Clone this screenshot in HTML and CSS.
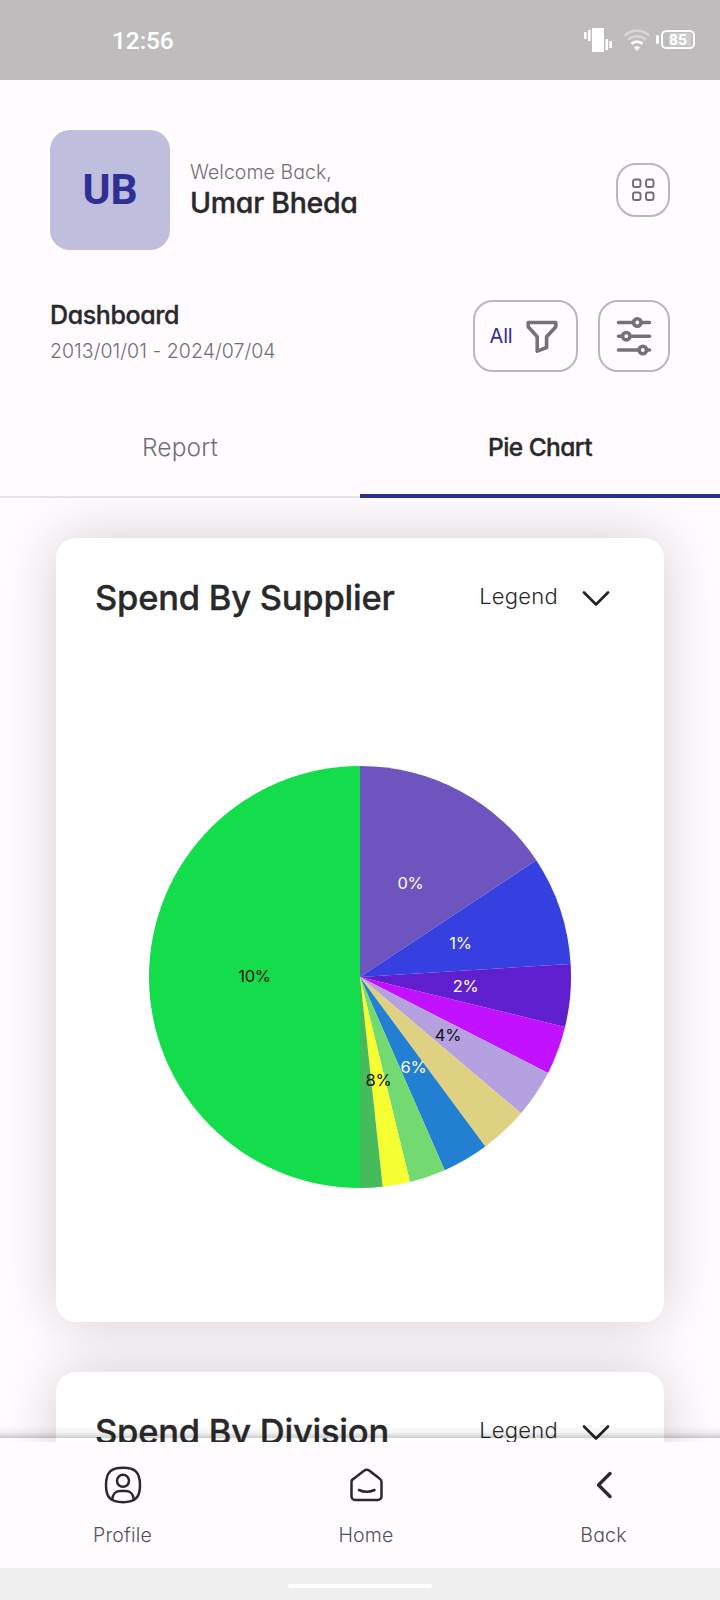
FILE: index.html
```html
<!DOCTYPE html>
<html lang="en">
<head>
<meta charset="utf-8">
<title>Dashboard</title>
<link rel="stylesheet" href="styles.css">
</head>
<body>
<div class="screen">
  <div class="status">
    <span class="clock">12:56</span>
    <svg class="status-icons" width="112" height="24" viewBox="0 0 112 24">
      <g fill="#fff">
        <rect x="0" y="4" width="2.6" height="7"/><rect x="4" y="2" width="2.6" height="11"/>
        <rect x="8" y="0" width="12" height="24"/>
        <rect x="21.500" y="11" width="2.600" height="11"/><rect x="25.300" y="13" width="2.600" height="7"/>
        <path d="M53 23l-3-3.500a4.500 4.500 0 0 1 6 0z"/>
        <rect x="72" y="7" width="3" height="9" rx="1.500"/>
      </g>
      <g fill="none" stroke="#fff" stroke-width="2.600">
        <path d="M40.800 7.400a18.500 18.500 0 0 1 24.400 0M44.300 11.600a13 13 0 0 1 17.400 0" opacity=".4"/>
        <path d="M47.500 15.800a8 8 0 0 1 11 0"/>
        <rect x="78" y="3" width="32" height="17" rx="4.500" stroke-width="2"/>
      </g>
      <rect x="85" y="5" width="22" height="13" rx="2" fill="#fff" opacity=".25"/>
      <text x="94" y="17" class="battery">85</text>
    </svg>
  </div>

  <header class="welcome">
    <div class="avatar">UB</div>
    <div class="who"><div class="hello">Welcome Back,</div><div class="name">Umar Bheda</div></div>
    <button class="btn grid-btn" aria-label="Menu">
      <svg width="24" height="24" viewBox="0 0 24 24" fill="none" stroke="#6f6f71" stroke-width="1.900">
        <rect x="2" y="1.500" width="7.500" height="7.500" rx="2"/><rect x="15" y="1.500" width="7.500" height="7.500" rx="2"/>
        <rect x="2" y="14.500" width="7.500" height="7.500" rx="2"/><rect x="15" y="14.500" width="7.500" height="7.500" rx="2"/>
      </svg>
    </button>
  </header>

  <section class="toolbar">
    <div class="heading"><div class="page-title">Dashboard</div><div class="dates">2013/01/01 - 2024/07/04</div></div>
    <button class="btn filter-btn"><span>All</span>
      <svg width="32" height="34" viewBox="0 0 32 34" fill="none" stroke="#737375" stroke-width="3.600" stroke-linejoin="round"><path d="M2.200 2.500h27.600v4.200l-9.200 10v10.800l-9.400 3.600V16.700L2.200 6.700z"/></svg>
    </button>
    <button class="btn slider-btn" aria-label="Settings">
      <svg width="36" height="40" viewBox="0 0 36 40" fill="none" stroke="#737375" stroke-width="3.600" stroke-linecap="round">
        <path d="M2.500 6.500H17M25.500 6.500h8M2.500 20.200H6M14.500 20.200h19M2.500 34H22.500M31 34h2.500"/>
        <circle cx="21.300" cy="6.500" r="3.700"/><circle cx="10.300" cy="20.200" r="3.700"/><circle cx="26.800" cy="34" r="3.700"/>
      </svg>
    </button>
  </section>

  <nav class="tabs"><div class="tab"><span>Report</span></div><div class="tab active"><span>Pie Chart</span></div></nav>

  <main class="content">
    <article class="card">
      <div class="card-head"><h2 class="supplier">Spend By Supplier</h2><span class="legend">Legend</span>
        <svg class="chevron" width="28" height="16" viewBox="0 0 28 16"><path d="M2 2.500l12 12 12-12"/></svg></div>
      <svg class="pie" width="424" height="424" viewBox="-212 -212 424 424">
        <path fill="#6e54be" d="M0 0V-211A211 211 0 0 1 176.300-116.700z"/>
        <path fill="#363fdf" d="M0 0L176.300-116.700A211 211 0 0 1 210.600-13z"/>
        <path fill="#601fcf" d="M0 0L210.600-13A211 211 0 0 1 205 50z"/>
        <path fill="#c111ff" d="M0 0L205 50A211 211 0 0 1 188 96z"/>
        <path fill="#b6a1e0" d="M0 0L188 96A211 211 0 0 1 161 136.300z"/>
        <path fill="#ded182" d="M0 0L161 136.300A211 211 0 0 1 125.300 169.600z"/>
        <path fill="#237fd1" d="M0 0L125.300 169.600A211 211 0 0 1 84.700 193.200z"/>
        <path fill="#73d971" d="M0 0L84.700 193.200A211 211 0 0 1 50 205z"/>
        <path fill="#f5ff31" d="M0 0L50 205A211 211 0 0 1 22.700 209.800z"/>
        <path fill="#46bb5c" d="M0 0L22.700 209.800A211 211 0 0 1 0 211z"/>
        <path fill="#14dd4b" d="M0 0V211A211 211 0 0 1 0-211z"/>
        <g class="light"><text x="50.500" y="-88">0%</text><text x="100.500" y="-28">1%</text><text x="105.500" y="15">2%</text><text x="53.500" y="96">6%</text></g>
        <g class="dark"><text x="88" y="64">4%</text><text x="18.500" y="109">8%</text><text x="-105.500" y="5">10%</text></g>
      </svg>
    </article>
    <article class="card">
      <div class="card-head"><h2 class="division">Spend By Division</h2><span class="legend">Legend</span>
        <svg class="chevron" width="28" height="16" viewBox="0 0 28 16"><path d="M2 2.500l12 12 12-12"/></svg></div>
    </article>
    <div class="nav-shadow"></div>
  </main>

  <nav class="bottom">
    <div class="item">
      <svg width="40" height="40" viewBox="0 0 40 40"><path d="M20 2.800C32 2.800 37 7 37 20S32 37.200 20 37.200 3 33 3 20 8 2.800 20 2.800z"/><circle cx="20" cy="15.800" r="6"/><path d="M9.200 34.500c.5-5 3.500-8.500 7.500-8.500h6.600c4 0 7 3.500 7.500 8.500"/></svg>
      <span>Profile</span></div>
    <div class="item">
      <svg width="40" height="40" viewBox="0 0 40 40"><path d="M8 13.500L18 5.700a5 5 0 0 1 5.500 0L33.500 13.500a4 4 0 0 1 2 3.500V31.500a3.500 3.500 0 0 1-3.500 3.500h-23A3.500 3.500 0 0 1 5.500 31.500V17a4 4 0 0 1 2.500-3.500z"/><path d="M13 25q7.500 3.500 15.500 0"/></svg>
      <span>Home</span></div>
    <div class="item">
      <svg class="back" width="40" height="40" viewBox="0 0 40 40"><path d="M26 8.500L14.500 20 26 31.500"/></svg>
      <span>Back</span></div>
  </nav>
  <div class="gesture"><div class="pill"></div></div>
</div>
</body>
</html>
```
FILE: styles.css
```css
* { box-sizing: border-box; }
body { margin: 0; }
.screen {
  width: 720px; height: 1600px; overflow: hidden;
  display: flex; flex-direction: column;
  background: #fffbff; color: #29292b;
  font-family: Inter, "Noto Sans", sans-serif;
  font-feature-settings: "cv11", "calt" 0;
}
.status {
  flex: none; height: 80px; padding: 0 24px 0 112px;
  display: flex; align-items: center; justify-content: space-between;
  background: #bebcbd;
}
.clock { font: 500 24.5px/30px Roboto, sans-serif; color: #fff; letter-spacing: -.1px; padding-top: 2px; }
.battery { font: 700 15.5px Roboto, sans-serif; fill: #fff; text-anchor: middle; }
.welcome { flex: none; display: flex; align-items: center; height: 170px; padding: 50px 50px 0; }
.avatar {
  width: 120px; height: 120px; border-radius: 20px; background: #bfbedd; color: #2f3094;
  font: 700 42.5px/120px Roboto, sans-serif; text-align: center;
}
.who { flex: 1; padding-left: 20px; white-space: nowrap; margin-top: -1px; }
.hello { font-size: 19.5px; line-height: 26px; font-weight: 300; color: #707072; letter-spacing: .06px; }
.name, .page-title, .card h2, .tab.active { -webkit-text-stroke: .35px currentColor; }
.name { font-size: 28.5px; line-height: 36px; font-weight: 500; letter-spacing: -.28px; }
.btn { padding: 0; border: 2px solid #b9b7b9; background: none; display: flex; align-items: center; justify-content: center; font-family: inherit; font-feature-settings: inherit; }
.grid-btn { width: 54px; height: 54px; border-radius: 20px; }
.toolbar { flex: none; display: flex; padding: 50px 50px 0; height: 122px; gap: 20px; }
.heading { flex: 1; white-space: nowrap; margin-top: -1px; }
.page-title { font-size: 25px; line-height: 32px; font-weight: 500; letter-spacing: -.4px; }
.dates { font-size: 19.5px; line-height: 26px; font-weight: 300; color: #707072; margin-top: 7px; letter-spacing: .04px; }
.filter-btn { width: 105px; height: 72px; border-radius: 20px; gap: 14px; font-size: 20px; color: #2f3094; padding: 0 3px 0 0; letter-spacing: -.2px; }
.filter-btn svg { margin-top: 2px; }
.slider-btn { width: 72px; height: 72px; border-radius: 20px; }
.tabs { flex: none; display: flex; height: 126px; }
.tab { flex: 1; display: flex; align-items: center; justify-content: center; border-bottom: 2px solid #e5e1ec; font-size: 24.5px; font-weight: 300; color: #707072; padding-top: 26px; letter-spacing: .15px; }
.tab.active { border-bottom: 4px solid #2a3092; color: #29292b; font-weight: 500; letter-spacing: -.55px; padding-top: 28px; }
.content { position: relative; flex: none; height: 944px; overflow: hidden; padding: 40px 56px 0; display: flex; flex-direction: column; gap: 50px; }
.card { flex: none; height: 784px; border-radius: 20px; background: #fff; box-shadow: 0 0 56px rgba(0, 0, 0, .18); padding: 40px 54px 0 40px; }
.card-head { display: flex; align-items: center; height: 40px; white-space: nowrap; }
.card h2 { flex: 1; margin: 0 0 0 -1px; font-size: 34.5px; line-height: 40px; font-weight: 500; letter-spacing: -.23px; }
.legend { font-size: 22px; line-height: 28px; font-weight: 300; margin-right: 24px; margin-top: -4px; letter-spacing: .25px; }
.chevron { fill: none; stroke: #222; stroke-width: 2.6; stroke-linecap: round; stroke-linejoin: round; }
.pie { display: block; margin: 147px 0 0 52px; }
.pie text { font-size: 16.500px; text-anchor: middle; letter-spacing: -.3px; }
.light { fill: #fff; }
.dark { fill: #111; }
.nav-shadow { position: absolute; left: 0; right: 0; bottom: 4px; height: 12px; background: linear-gradient(rgba(0, 0, 0, 0), rgba(0, 0, 0, .05) 55%, rgba(0, 0, 0, .2)); }
.bottom { flex: none; height: 126px; display: grid; grid-template-columns: 245px 242px 233px; padding-top: 22.5px; }
.item { display: flex; flex-direction: column; align-items: center; gap: 18px; font-size: 19.500px; line-height: 24px; font-weight: 300; color: #4f5159; letter-spacing: .2px; }
.item svg { fill: none; stroke: #29292b; stroke-width: 2.5; stroke-linecap: round; stroke-linejoin: round; }
.item svg.back { stroke-width: 3.4; }
.gesture { flex: none; height: 32px; background: #efefef; display: flex; align-items: center; justify-content: center; padding-top: 4px; }
.pill { width: 144px; height: 4px; border-radius: 2px; background: #fff; }
```
